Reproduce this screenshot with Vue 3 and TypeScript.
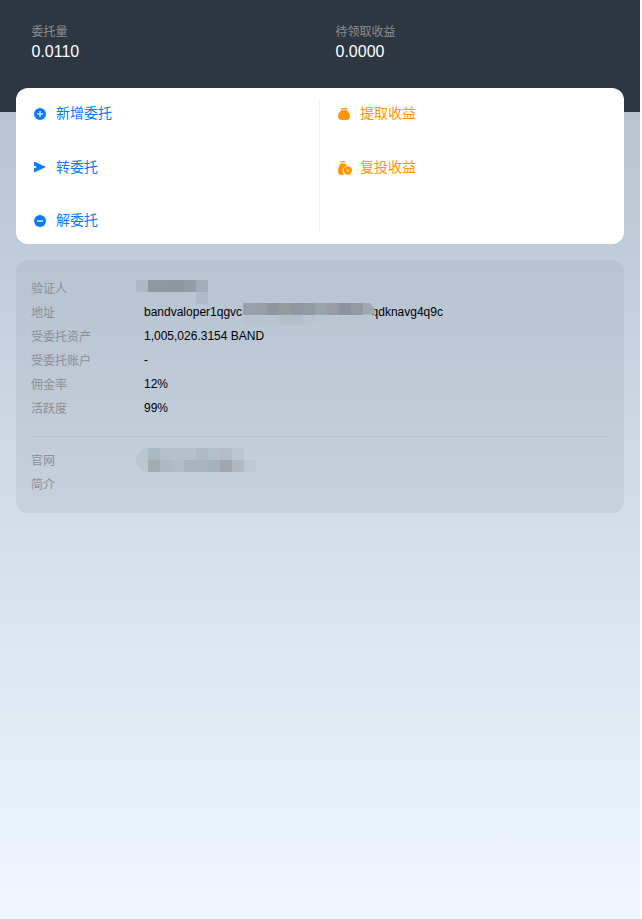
<script setup lang="ts">
interface Row { label: string; value: string }
const rows: Row[] = [
  { label: '受委托资产', value: '1,005,026.3154 BAND' },
  { label: '受委托账户', value: '-' },
  { label: '佣金率', value: '12%' },
  { label: '活跃度', value: '99%' },
]
const validatorMosaic = ['#aeb7c3', '#8f989f', '#8f989f', '#8e979e', '#949ca6', '#a0adba']
const addressMosaic = ['#9a9fa9', '#9a9ea9', '#8f96a2', '#969b9e', '#8f98a2', '#9199a2', '#98a4a9', '#989ca4', '#8b93a1', '#9299a3', '#a0a8ae']
const addressFaint = ['#b9c4d0', '#b9c4d0', '#b9c4d0', '#b3bfcb', '#b3bfcb', '#b9c4d0', '#bbc6d2', '#bbc6d2', '#bbc6d2', '#bbc6d2', '#bbc6d2']
const siteTop = ['#aabac2', '#b4c0ca', '#b4c0ca', '#b4c0ca', '#afbac8', '#b2c0ca', '#b3bdc9', '#bbc7d1', '#c2cedb']
const siteBottom = ['#a0adb3', '#adb9c3', '#b0bcc6', '#a9b2bd', '#a9b2bf', '#a5b3bc', '#a0a5b0', '#b0b9c3', '#bdc8d3']
</script>

<template>
  <div class="page">
    <header class="summary">
      <div class="stat">
        <div class="stat-label">委托量</div>
        <div class="stat-value">0.0110</div>
      </div>
      <div class="stat">
        <div class="stat-label">待领取收益</div>
        <div class="stat-value">0.0000</div>
      </div>
    </header>

    <section class="actions">
      <div class="col col-left">
        <a class="action blue">
          <svg class="icon" viewBox="0 0 12 12"><circle cx="6" cy="6" r="6" fill="#0a7aff" /><path d="M6 3v6M3 6h6" stroke="#c9e0ff" stroke-width="1.5" /></svg>
          <span>新增委托</span>
        </a>
        <a class="action blue">
          <svg class="icon" viewBox="0 0 12 12"><path d="M0 0.500 12 6 0 11.500V7.500L3 6 0 4.500z" fill="#0a7aff" /></svg>
          <span>转委托</span>
        </a>
        <a class="action blue">
          <svg class="icon" viewBox="0 0 12 12"><circle cx="6" cy="6" r="6" fill="#0a7aff" /><path d="M3 6h6" stroke="#c9e0ff" stroke-width="1.6" /></svg>
          <span>解委托</span>
        </a>
      </div>
      <div class="col col-right">
        <a class="action orange">
          <svg class="icon" viewBox="0 0 12 12"><path d="M3 0h6v1.500H3zM3.400 2.300h5.200C10.700 4 12 6 12 8.300 12 10.800 10.600 12 8.500 12h-5C1.400 12 0 10.800 0 8.300 0 6 1.300 4 3.400 2.300z" fill="#ff9500" /></svg>
          <span>提取收益</span>
        </a>
        <a class="action orange">
          <svg class="icon icon-wide" viewBox="0 0 14 14"><path d="M2.500 0h4.500v1.300H2.500zM2.600 2.400h4.300C7.900 3.200 8.600 4 9 4.900 6.500 5 4.600 7 4.600 9.500c0 1.700.8 3.300 2 4.300H3.200C1.200 13.800 0 12.700 0 10.400 0 7.300 1 4.300 2.600 2.400z" fill="#ff9500" /><circle cx="9.800" cy="9.500" r="4.200" fill="#ff9500" /><circle cx="9.800" cy="9.500" r="1.500" fill="#ffc77a" /></svg>
          <span>复投收益</span>
        </a>
      </div>
    </section>

    <section class="details">
      <div class="row">
        <span class="label">验证人</span>
        <div class="mosaic validator">
          <i v-for="(c, i) in validatorMosaic" :key="i" :style="{ background: c }"></i>
          <i class="validator-tail"></i>
        </div>
      </div>
      <div class="row">
        <span class="label">地址</span>
        <span class="value address-value">
          <span>bandvaloper1qgvc</span>
          <span class="mosaic address">
            <i v-for="(c, j) in addressMosaic" :key="j" :style="{ background: c }"></i>
            <span class="mosaic address-faint">
              <i v-for="(c, j) in addressFaint" :key="j" :style="{ background: c }"></i>
            </span>
          </span>
          <span>qdknavg4q9c</span>
        </span>
      </div>
      <div v-for="row in rows" :key="row.label" class="row">
        <span class="label">{{ row.label }}</span>
        <span class="value">{{ row.value }}</span>
      </div>
      <hr class="divider" />
      <div class="row">
        <span class="label">官网</span>
        <div class="site-wrap">
          <div class="mosaic site">
            <b class="site-cap"></b>
            <i v-for="(c, j) in siteTop" :key="j" :style="{ background: c }"></i>
          </div>
          <div class="mosaic site">
            <b class="site-cap"></b>
            <i v-for="(c, j) in siteBottom" :key="j" :style="{ background: c }"></i>
          </div>
        </div>
      </div>
      <div class="row">
        <span class="label">简介</span>
      </div>
    </section>
  </div>
</template>

<style>
html, body { margin: 0; background: #fff; }
</style>

<style scoped>
.page {
  width: 640px;
  height: 919px;
  box-sizing: border-box;
  padding-bottom: 1px;
  background: linear-gradient(180deg, #aebccd 0%, #f0f7ff 100%);
  font-family: "Liberation Sans", "Noto Sans CJK SC", sans-serif;
}
.summary {
  display: grid;
  grid-template-columns: 304px 1fr;
  height: 112px;
  box-sizing: border-box;
  padding: 24px 16px 0 31.500px;
  background: #2d3742;
}
.stat-label {
  font-size: 12px;
  line-height: 16px;
  color: #8e8e93;
}
.stat-value {
  font-size: 16px;
  line-height: 20px;
  margin-top: 2px;
  color: #fff;
}
.actions {
  display: grid;
  grid-template-columns: 1fr 1fr;
  height: 156px;
  box-sizing: border-box;
  margin: -24px 16px 0;
  padding: 11px 0 12px;
  background: #fff;
  border-radius: 12px;
}
.col {
  display: flex;
  flex-direction: column;
}
.col-left {
  border-right: 1px solid #eff1f3;
  padding-left: 18px;
}
.col-right { padding-left: 18px; }
.action {
  display: flex;
  align-items: center;
  gap: 10px;
  height: 26px;
  margin-bottom: 27.500px;
  font-size: 14px;
}
.action:last-child { margin-bottom: 0; }
.blue { color: #0a7aff; }
.orange { color: #ff9500; }
.icon {
  width: 12px;
  height: 12px;
  flex: none;
  margin-top: 3px;
}
.icon-wide {
  width: 14px;
  height: 14px;
  margin-right: -2px;
  margin-top: 5px;
}
.details {
  margin: 16px 16px 0;
  height: 253px;
  box-sizing: border-box;
  padding: 15px 16px 0 15px;
  border-radius: 12px;
  background: rgba(120, 130, 145, 0.13);
}
.row {
  display: flex;
  align-items: center;
  height: 24px;
  font-size: 12px;
}
.label {
  width: 113px;
  flex: none;
  color: #8e8e93;
}
.value {
  color: #000;
  white-space: nowrap;
  padding-top: 1px;
}
.address-value { display: flex; }
.mosaic { display: flex; }
.mosaic i {
  display: block;
  width: 12px;
  height: 12px;
  flex: none;
}
.validator {
  position: relative;
  margin-left: -8px;
  margin-top: -2px;
}
.mosaic .validator-tail {
  position: absolute;
  left: 60px;
  top: 12px;
  background: #adbac8;
}
.address {
  position: relative;
  top: -2px;
  z-index: 1;
  width: 132px;
  height: 12px;
  margin: 0 -3px 0 0.500px;
}
.address > i:last-of-type {
  clip-path: polygon(0 0, 55% 0, 100% 45%, 100% 100%, 0 100%);
}
.address-faint {
  position: absolute;
  left: 0;
  top: 12px;
}
.address-faint i { height: 10px; }
.site-wrap {
  margin-left: -8px;
  margin-top: 2px;
  display: flex;
  flex-direction: column;
}
.site-cap {
  display: block;
  width: 12px;
  height: 12px;
  background: #bac6d1;
}
.site:first-child .site-cap { border-top-left-radius: 12px; }
.site:last-child .site-cap { border-bottom-left-radius: 12px; }
.divider {
  border: 0;
  border-top: 1px solid rgba(120, 130, 145, 0.2);
  margin: 17px 0 10px;
  height: 0;
}
</style>
